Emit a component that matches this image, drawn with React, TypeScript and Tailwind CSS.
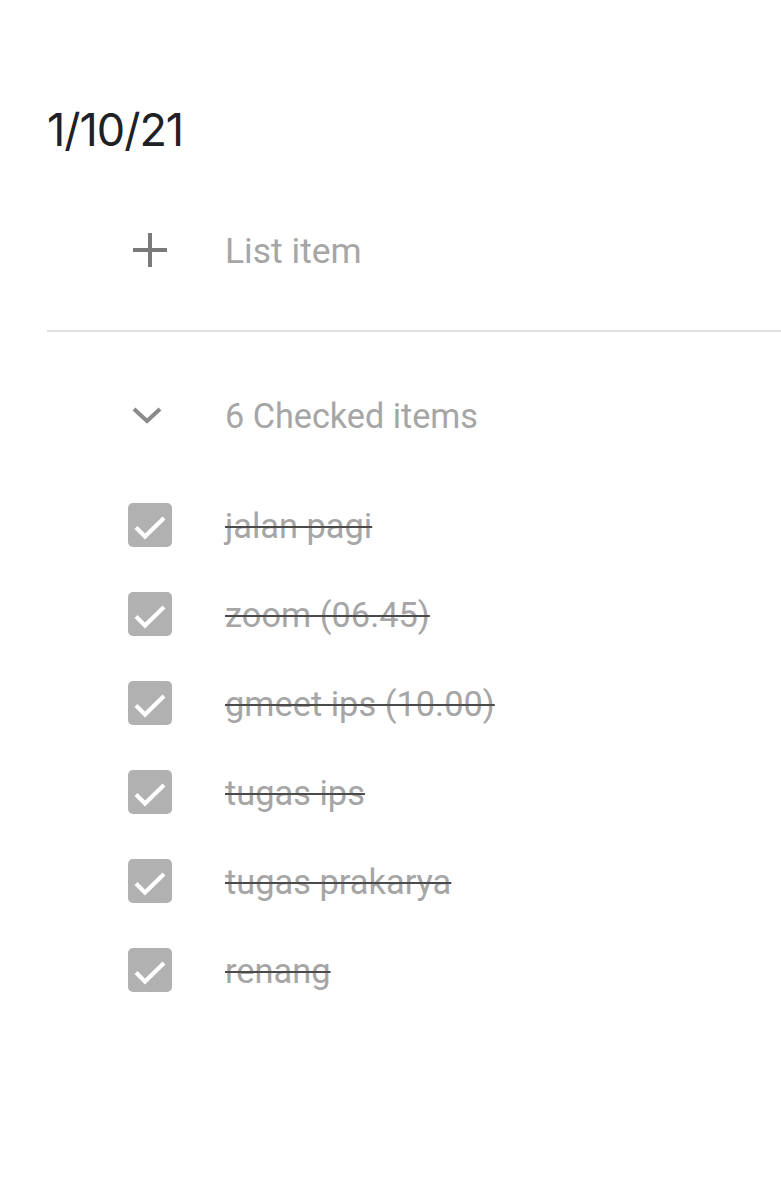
import React from 'react';

const items = ['jalan pagi', 'zoom (06.45)', 'gmeet ips (10.00)', 'tugas ips', 'tugas prakarya', 'renang'];

const CheckBox = () => (
    <div className="w-[44px] h-[44px] shrink-0 rounded-[5px] bg-[#b1b1b1]">
        <svg width="44" height="44" viewBox="0 0 44 44" fill="none">
            <path d="M8 24.5l9 9 19-18.5" stroke="#ffffff" strokeWidth="4.2" />
        </svg>
    </div>
);

export default function App() {
    return (
        <div className="w-[781px] h-[1200px] bg-white pl-[47px] font-['Roboto',sans-serif]">
            <div className="pt-[101px] h-[157px] flex items-center">
                <span className="font-['Inter',sans-serif] text-[45px] leading-none text-[#202124] tracking-[-1px]">1/10/21</span>
            </div>

            <div className="mt-[48px] h-[90px] flex items-center pl-[81px]">
                <div className="w-[44px] flex justify-center">
                    <svg width="38" height="38" viewBox="0 0 38 38">
                        <path d="M19 2v34M2 19h34" stroke="#7a7a7a" strokeWidth="4" />
                    </svg>
                </div>
                <span className="ml-[53px] pt-[4px] text-[35.5px] text-[#a6a6a6]">List item</span>
            </div>

            <div className="mt-[35px] border-t-2 border-[#e0e0e0]" />

            <div className="mt-[38px] h-[90px] flex items-center pl-[81px]">
                <div className="w-[44px] flex justify-center pr-[6px]">
                    <svg width="32" height="20" viewBox="0 0 32 20">
                        <path d="M3 4l13 12 13-12" stroke="#8a8a8a" strokeWidth="4" fill="none" />
                    </svg>
                </div>
                <span className="ml-[53px] pt-[4px] text-[34.2px] text-[#a6a6a6]">6 Checked items</span>
            </div>

            <div className="mt-[20px] pl-[81px]">
                {items.map((t) => (
                    <div key={t} className="h-[89px] flex items-center">
                        <CheckBox />
                        <span className="ml-[53px] pt-[5px] text-[34.4px] text-[#a6a6a6] line-through decoration-[#4a4a4a] decoration-2">{t}</span>
                    </div>
                ))}
            </div>
        </div>
    );
}
